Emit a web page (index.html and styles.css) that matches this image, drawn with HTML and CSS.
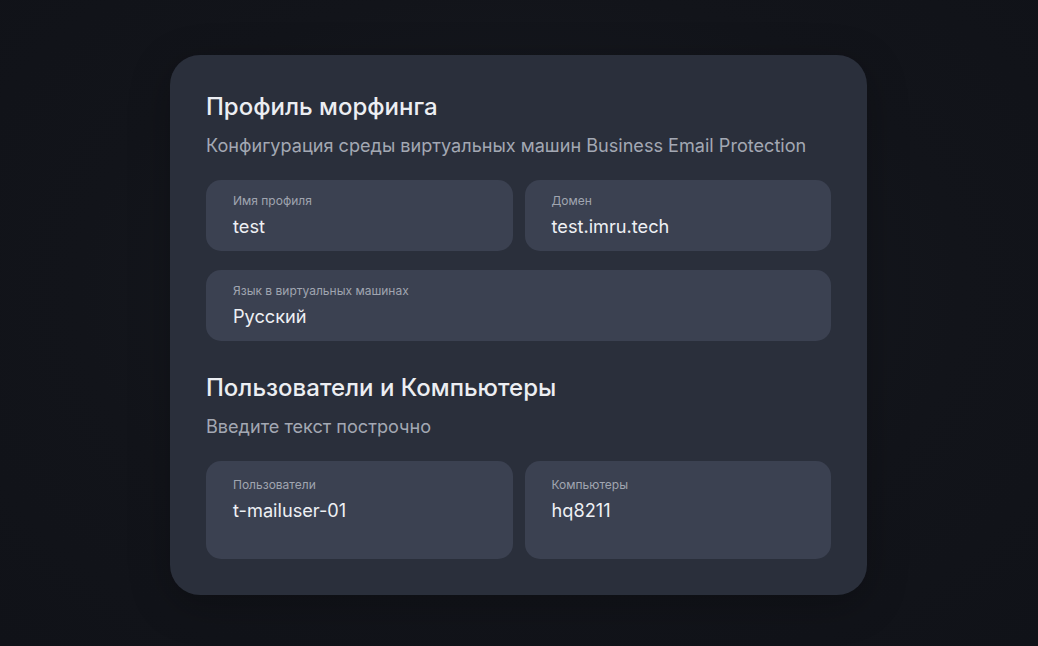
FILE: index.html
```html
<!DOCTYPE html>
<html lang="ru">
<head>
<meta charset="utf-8">
<title>Профиль морфинга</title>
<link rel="stylesheet" href="styles.css">
</head>
<body>
<main class="page">
  <section class="card">
    <h1 class="title">Профиль морфинга</h1>
    <p class="subtitle">Конфигурация среды виртуальных машин Business Email Protection</p>
    <div class="grid">
      <div class="field">
        <span class="label">Имя профиля</span>
        <span class="value">test</span>
      </div>
      <div class="field">
        <span class="label">Домен</span>
        <span class="value">test.imru.tech</span>
      </div>
      <div class="field wide">
        <span class="label">Язык в виртуальных машинах</span>
        <span class="value">Русский</span>
      </div>
    </div>

    <h2 class="title section">Пользователи и Компьютеры</h2>
    <p class="subtitle">Введите текст построчно</p>
    <div class="grid">
      <div class="field tall">
        <span class="label">Пользователи</span>
        <span class="value">t-mailuser-01</span>
      </div>
      <div class="field tall">
        <span class="label">Компьютеры</span>
        <span class="value">hq8211</span>
      </div>
    </div>
  </section>
</main>
</body>
</html>
```

FILE: styles.css
```css
* { box-sizing: border-box; }
html, body { margin: 0; padding: 0; }
body {
  width: 1038px;
  height: 646px;
  overflow: hidden;
  background: radial-gradient(ellipse at 50% 45%, #181b22 0%, #12141a 60%, #101218 100%);
  font-family: Inter, "Noto Sans", sans-serif;
  -webkit-font-smoothing: antialiased;
}
.page {
  display: flex;
  justify-content: flex-start;
  padding-top: 55px;
  padding-left: 170px;
}
.card {
  width: 697px;
  height: 540px;
  background: #2a2f3b;
  border-radius: 30px;
  padding: 36px;
  box-shadow: 0 10px 40px rgba(0,0,0,0.25);
}
.title {
  margin: 0;
  font-size: 24px;
  line-height: 31px;
  font-weight: 500;
  color: #eceef2;
  letter-spacing: 0;
}
.title.section { margin-top: 31px; }
.subtitle {
  margin: 10px 0 0;
  font-size: 18.1px;
  line-height: 26px;
  color: #a3a8b3;
  font-weight: 400;
  letter-spacing: 0;
}
.grid {
  margin-top: 22px;
  display: grid;
  grid-template-columns: 1fr 1fr;
  column-gap: 12px;
  row-gap: 19px;
  width: 625px;
}
.field {
  background: #3b4151;
  border-radius: 15px;
  padding: 13px 27px 12px;
  height: 71px;
  display: flex;
  flex-direction: column;
}
.field.wide { grid-column: 1 / span 2; }
.field.tall { height: 98px; padding-top: 16px; }
.label {
  font-size: 12px;
  line-height: 16px;
  color: #a0a5b0;
}
.value {
  margin-top: 5px;
  font-size: 18.2px;
  line-height: 24px;
  color: #eef0f4;
}
```
